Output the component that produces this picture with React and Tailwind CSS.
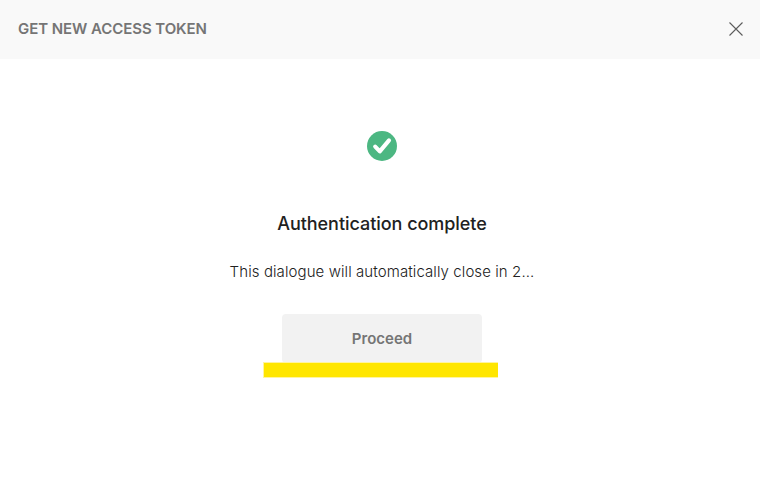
import React, { useState } from "react";

const CloseIcon = () => (
  <svg width="14" height="14" viewBox="0 0 14 14" fill="none" stroke="#5c5c5c" strokeWidth="1.1">
    <path d="M0.5 0.5 13.5 13.5M13.5 0.5 0.5 13.5" />
  </svg>
);

const SuccessIcon = () => (
  <svg width="30" height="30" viewBox="0 0 30 30" fill="none">
    <circle cx="15" cy="15" r="15" fill="#4cb782" />
    <path d="M8.2 15.6 12.8 20.4 22 9.4" stroke="#fff" strokeWidth="4.1" strokeLinecap="round" strokeLinejoin="round" />
  </svg>
);

export default function App() {
  const [secondsLeft] = useState(2);

  return (
    <div className="flex h-[479px] w-[760px] flex-col overflow-hidden bg-white font-['Inter',sans-serif]">
      {/* Header */}
      <header className="flex h-[59px] items-center justify-between bg-[#f9f9f9] pr-[17px] pb-0.5 pl-[18px]">
        <h1 className="text-[15px] leading-5 font-semibold tracking-[-0.07px] text-[#757575]">GET NEW ACCESS TOKEN</h1>
        <button aria-label="Close">
          <CloseIcon />
        </button>
      </header>

      {/* Body */}
      <main className="flex flex-col items-center pt-[72px] pl-1">
        <SuccessIcon />
        <h2 className="mt-[51px] text-[18px] leading-6 font-medium tracking-[-0.04px] text-[#212121]">
          Authentication complete
        </h2>
        <p className="mt-[26px] text-[15px] leading-5 font-light tracking-[0.09px] text-[#212121]">
          This dialogue will automatically close in {secondsLeft}...
        </p>
        <button className="mt-8 h-[49px] w-[200px] rounded bg-[#f2f2f2] pt-0.5 text-[15px] font-semibold text-[#757575]">
          Proceed
        </button>
        {/* Highlighter stroke under the button */}
        <div className="z-10 -mt-px mr-[3px] h-4 w-[235px] border-y border-l border-[#fff4a0] bg-[#ffe600]" />
      </main>
    </div>
  );
}
